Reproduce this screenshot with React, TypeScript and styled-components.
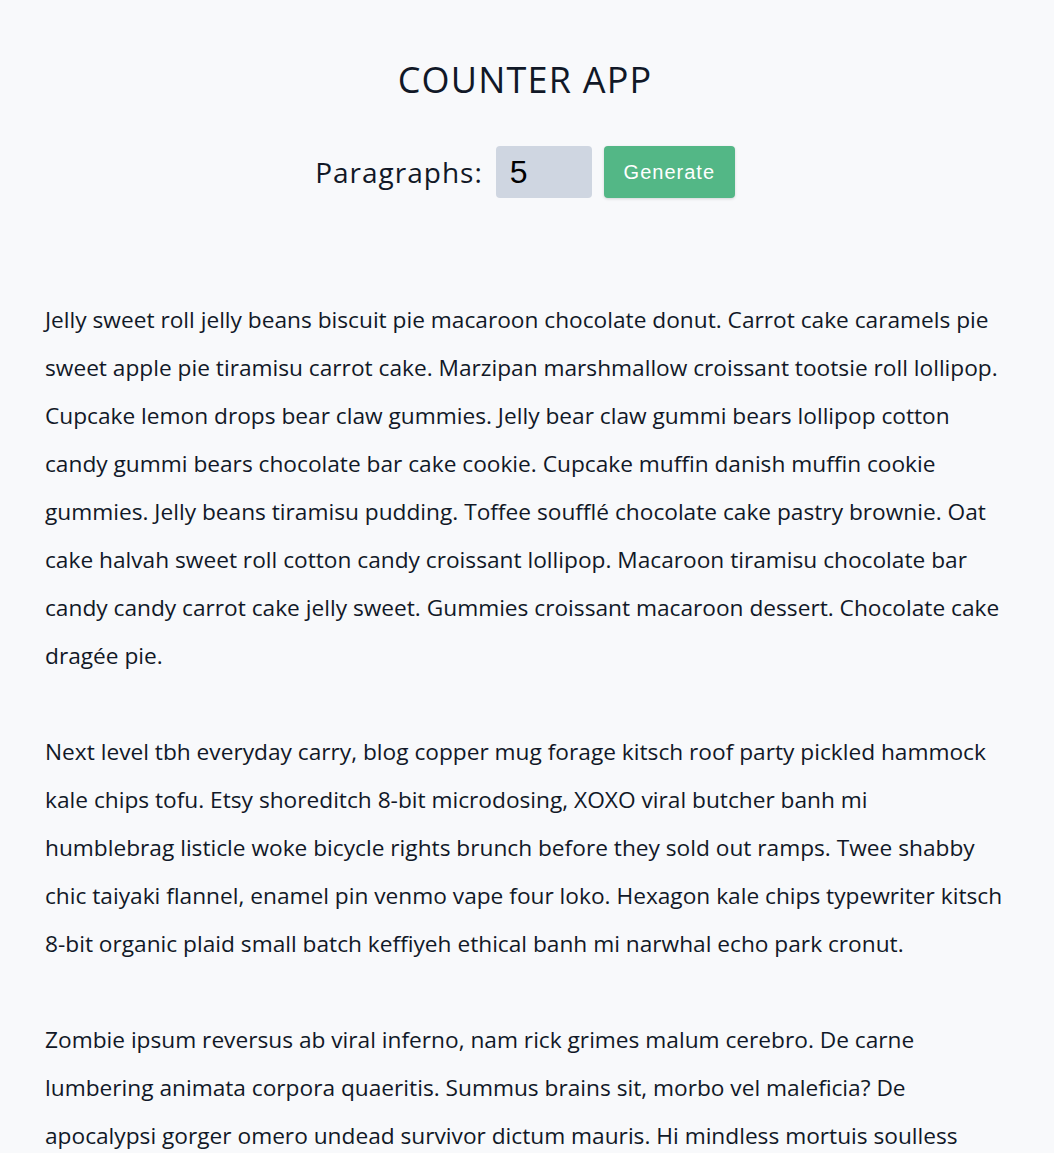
import React, { useState } from "react";
import styled, { createGlobalStyle } from "styled-components";

const Global = createGlobalStyle`
  * { box-sizing: border-box; }
  body {
    margin: 0;
    background: #f8f9fb;
    color: #111827;
    font-family: "Open Sans", "Noto Sans", sans-serif;
  }
`;

const Section = styled.section`
  padding: 56px 0 0;
`;

const Title = styled.h3`
  margin: 0;
  padding-right: 4px;
  text-align: center;
  font-size: 36px;
  font-weight: 400;
  letter-spacing: 1.2px;
  line-height: 48px;
  color: #111827;
`;

const Form = styled.form`
  display: flex;
  justify-content: center;
  align-items: center;
  margin-top: 42px;
  padding-right: 4px;
  gap: 12px;
`;

const Label = styled.label`
  font-size: 28px;
  letter-spacing: 1px;
  margin-right: 1px;
`;

const Input = styled.input`
  width: 96px;
  height: 52px;
  border: none;
  border-radius: 4px;
  background: #cfd6e1;
  padding: 0 14px;
  font-size: 32px;
  font-family: "Liberation Sans", sans-serif;
  color: #000;
  outline: none;
`;

const Button = styled.button`
  width: 131px;
  height: 52px;
  border: none;
  border-radius: 4px;
  background: #53b786;
  color: #fff;
  font-size: 20px;
  letter-spacing: 1px;
  font-family: "Liberation Sans", sans-serif;
  box-shadow: 0 1px 3px rgba(0, 0, 0, 0.15);
  cursor: pointer;
`;

const Text = styled.article`
  margin: 98px 0 0 45px;
  width: 957.4px;
`;

const Para = styled.p`
  margin: 0 0 48px;
  font-size: 22.7px;
  line-height: 48px;
`;

const paragraphs = [
  "Jelly sweet roll jelly beans biscuit pie macaroon chocolate donut. Carrot cake caramels pie sweet apple pie tiramisu carrot cake. Marzipan marshmallow croissant tootsie roll lollipop. Cupcake lemon drops bear claw gummies. Jelly bear claw gummi bears lollipop cotton candy gummi bears chocolate bar cake cookie. Cupcake muffin danish muffin cookie gummies. Jelly beans tiramisu pudding. Toffee soufflé chocolate cake pastry brownie. Oat cake halvah sweet roll cotton candy croissant lollipop. Macaroon tiramisu chocolate bar candy candy carrot cake jelly sweet. Gummies croissant macaroon dessert. Chocolate cake dragée pie.",
  "Next level tbh everyday carry, blog copper mug forage kitsch roof party pickled hammock kale chips tofu. Etsy shoreditch 8-bit microdosing, XOXO viral butcher banh mi humblebrag listicle woke bicycle rights brunch before they sold out ramps. Twee shabby chic taiyaki flannel, enamel pin venmo vape four loko. Hexagon kale chips typewriter kitsch 8-bit organic plaid small batch keffiyeh ethical banh mi narwhal echo park cronut.",
  "Zombie ipsum reversus ab viral inferno, nam rick grimes malum cerebro. De carne lumbering animata corpora quaeritis. Summus brains sit, morbo vel maleficia? De apocalypsi gorger omero undead survivor dictum mauris. Hi mindless mortuis soulless creaturas, imo evil stalking monstra adventus resi dentevil vultus comedat cerebella viventium.",
];

export default function App() {
  const [count, setCount] = useState<number>(5);
  return (
    <>
      <Global />
      <Section>
        <Title>COUNTER APP</Title>
        <Form onSubmit={(e) => e.preventDefault()}>
          <Label htmlFor="amount">Paragraphs:</Label>
          <Input
            type="number"
            id="amount"
            value={count}
            onChange={(e) => setCount(Number(e.target.value))}
          />
          <Button type="submit">Generate</Button>
        </Form>
        <Text>
          {paragraphs.map((p, i) => (
            <Para key={i}>{p}</Para>
          ))}
        </Text>
      </Section>
    </>
  );
}
